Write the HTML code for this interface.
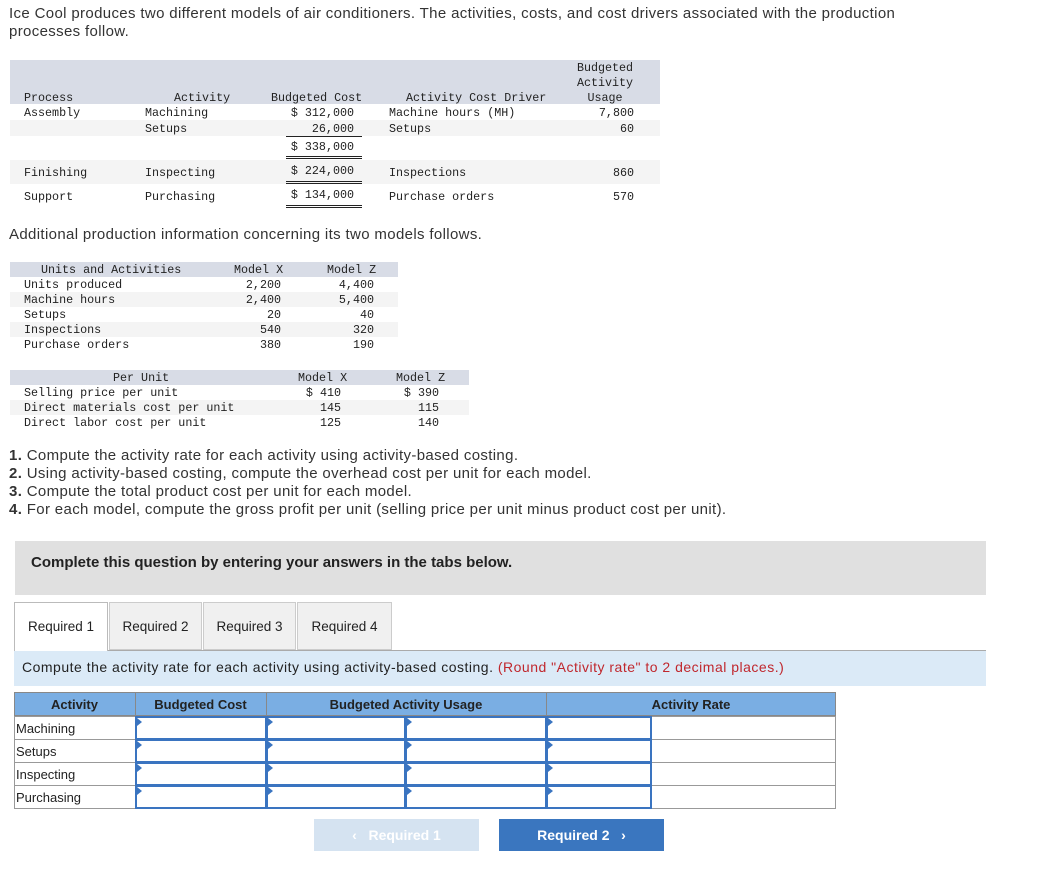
<!DOCTYPE html>
<html><head><meta charset="utf-8"><style>
*{margin:0;padding:0;box-sizing:border-box}
body{width:1042px;height:885px;background:#fff;position:relative;font-family:"Liberation Sans",sans-serif;color:#333;overflow:hidden}
.a{position:absolute;white-space:nowrap}
.m{font-family:"Liberation Mono",monospace;font-size:11.7px;color:#222}
.band{position:absolute;background:#d8dce6}
.lite{position:absolute;background:#f4f4f4}
.r{text-align:right}
.s{font-size:15px;letter-spacing:0.35px;color:#333}
.dl{position:absolute;border-top:3px double #222;height:3px}
.sl{position:absolute;border-top:1px solid #222}
.cell{position:absolute;border:1px solid #999}
.inp{position:absolute;border:2px solid #3a74c0;background:#fff}
.inp:before{content:"";position:absolute;left:0;top:0;border-left:5px solid #3a74c0;border-top:4px solid transparent;border-bottom:4px solid transparent}
.t{font-family:"Liberation Sans",sans-serif;font-size:13px;color:#222}
</style></head><body>
<div class="a s" style="left:9px;top:5px;line-height:18px">Ice Cool produces two different models of air conditioners. The activities, costs, and cost drivers associated with the production<br>processes follow.</div>

<div class="band" style="left:10px;top:60px;width:650px;height:44px"></div>
<div class="lite" style="left:10px;top:120px;width:650px;height:16px"></div>
<div class="lite" style="left:10px;top:160px;width:650px;height:24px"></div>
<div class="a m" style="left:24px;top:91px">Process</div>
<div class="a m" style="left:174px;top:91px">Activity</div>
<div class="a m" style="left:271px;top:91px">Budgeted Cost</div>
<div class="a m" style="left:406px;top:91px">Activity Cost Driver</div>
<div class="a m r" style="left:570px;top:61px;width:70px;line-height:15px;text-align:center">Budgeted<br>Activity<br>Usage</div>
<div class="a m" style="left:24px;top:106px">Assembly</div>
<div class="a m" style="left:145px;top:106px">Machining</div>
<div class="a m r" style="left:260px;top:106px;width:94px">$ 312,000</div>
<div class="a m" style="left:389px;top:106px">Machine hours (MH)</div>
<div class="a m r" style="left:560px;top:106px;width:74px">7,800</div>
<div class="a m" style="left:145px;top:122px">Setups</div>
<div class="a m r" style="left:260px;top:122px;width:94px">26,000</div>
<div class="a m" style="left:389px;top:122px">Setups</div>
<div class="a m r" style="left:560px;top:122px;width:74px">60</div>
<div class="sl" style="left:286px;top:136px;width:76px"></div>
<div class="a m r" style="left:260px;top:140px;width:94px">$ 338,000</div>
<div class="dl" style="left:286px;top:156px;width:76px"></div>
<div class="a m" style="left:24px;top:166px">Finishing</div>
<div class="a m" style="left:145px;top:166px">Inspecting</div>
<div class="a m r" style="left:260px;top:164px;width:94px">$ 224,000</div>
<div class="a m" style="left:389px;top:166px">Inspections</div>
<div class="a m r" style="left:560px;top:166px;width:74px">860</div>
<div class="dl" style="left:286px;top:181px;width:76px"></div>
<div class="a m" style="left:24px;top:190px">Support</div>
<div class="a m" style="left:145px;top:190px">Purchasing</div>
<div class="a m r" style="left:260px;top:188px;width:94px">$ 134,000</div>
<div class="a m" style="left:389px;top:190px">Purchase orders</div>
<div class="a m r" style="left:560px;top:190px;width:74px">570</div>
<div class="dl" style="left:286px;top:205px;width:76px"></div>

<div class="a s" style="left:9px;top:226px">Additional production information concerning its two models follows.</div>

<div class="band" style="left:10px;top:262px;width:388px;height:15px"></div>
<div class="lite" style="left:10px;top:292px;width:388px;height:15px"></div>
<div class="lite" style="left:10px;top:322px;width:388px;height:15px"></div>
<div class="a m" style="left:41px;top:263px">Units and Activities</div>
<div class="a m" style="left:234px;top:263px">Model X</div>
<div class="a m" style="left:327px;top:263px">Model Z</div>
<div class="a m" style="left:24px;top:278px;line-height:15px">Units produced<br>Machine hours<br>Setups<br>Inspections<br>Purchase orders</div>
<div class="a m r" style="left:220px;top:278px;width:61px;line-height:15px">2,200<br>2,400<br>20<br>540<br>380</div>
<div class="a m r" style="left:313px;top:278px;width:61px;line-height:15px">4,400<br>5,400<br>40<br>320<br>190</div>

<div class="band" style="left:10px;top:370px;width:459px;height:15px"></div>
<div class="lite" style="left:10px;top:400px;width:459px;height:15px"></div>
<div class="a m" style="left:113px;top:371px">Per Unit</div>
<div class="a m" style="left:298px;top:371px">Model X</div>
<div class="a m" style="left:396px;top:371px">Model Z</div>
<div class="a m" style="left:24px;top:386px;line-height:15px">Selling price per unit<br>Direct materials cost per unit<br>Direct labor cost per unit</div>
<div class="a m r" style="left:280px;top:386px;width:61px;line-height:15px">$ 410<br>145<br>125</div>
<div class="a m r" style="left:378px;top:386px;width:61px;line-height:15px">$ 390<br>115<br>140</div>

<div class="a s" style="left:9px;top:447px;line-height:18px"><b>1.</b> Compute the activity rate for each activity using activity-based costing.<br><b>2.</b> Using activity-based costing, compute the overhead cost per unit for each model.<br><b>3.</b> Compute the total product cost per unit for each model.<br><b>4.</b> For each model, compute the gross profit per unit (selling price per unit minus product cost per unit).</div>

<div class="a" style="left:15px;top:541px;width:971px;height:54px;background:#e0e0e0"></div>
<div class="a" style="left:31px;top:554px;font-size:15px;font-weight:bold;color:#222">Complete this question by entering your answers in the tabs below.</div>

<div class="a" style="left:14px;top:650px;width:972px;border-top:1px solid #aaa"></div>
<div class="a t" style="left:14px;top:602px;width:94px;height:49px;background:#fff;border:1px solid #bbb;border-bottom:none;text-align:center;line-height:48px;font-size:13.5px">Required 1</div>
<div class="a t" style="left:109px;top:602px;width:93px;height:48px;background:#f0f0f0;border:1px solid #ccc;text-align:center;line-height:48px;font-size:13.5px">Required 2</div>
<div class="a t" style="left:203px;top:602px;width:93px;height:48px;background:#f0f0f0;border:1px solid #ccc;text-align:center;line-height:48px;font-size:13.5px">Required 3</div>
<div class="a t" style="left:297px;top:602px;width:95px;height:48px;background:#f0f0f0;border:1px solid #ccc;text-align:center;line-height:48px;font-size:13.5px">Required 4</div>

<div class="a" style="left:14px;top:651px;width:972px;height:35px;background:#dbeaf7"></div>
<div class="a t" style="left:22px;top:659px;font-size:14px;letter-spacing:0.5px">Compute the activity rate for each activity using activity-based costing. <span style="color:#c0272d">(Round "Activity rate" to 2 decimal places.)</span></div>

<div class="a" style="left:14px;top:692px;width:822px;height:24px;background:#7aaee3;border:1px solid #888"></div>
<div class="a" style="left:135px;top:692px;height:24px;border-left:1px solid #888"></div>
<div class="a" style="left:266px;top:692px;height:24px;border-left:1px solid #888"></div>
<div class="a" style="left:546px;top:692px;height:24px;border-left:1px solid #888"></div>
<div class="a t" style="left:14px;top:697px;width:121px;text-align:center;font-weight:bold">Activity</div>
<div class="a t" style="left:135px;top:697px;width:131px;text-align:center;font-weight:bold">Budgeted Cost</div>
<div class="a t" style="left:266px;top:697px;width:280px;text-align:center;font-weight:bold">Budgeted Activity Usage</div>
<div class="a t" style="left:546px;top:697px;width:290px;text-align:center;font-weight:bold">Activity Rate</div>

<div class="cell" style="left:14px;top:716px;width:822px;height:24px"></div>
<div class="cell" style="left:14px;top:739px;width:822px;height:24px"></div>
<div class="cell" style="left:14px;top:762px;width:822px;height:24px"></div>
<div class="cell" style="left:14px;top:785px;width:822px;height:24px"></div>
<div class="a t" style="left:16px;top:721px">Machining</div>
<div class="a t" style="left:16px;top:744px">Setups</div>
<div class="a t" style="left:16px;top:767px">Inspecting</div>
<div class="a t" style="left:16px;top:790px">Purchasing</div>

<div class="inp" style="left:135px;top:716px;width:132px;height:24px"></div>
<div class="inp" style="left:266px;top:716px;width:140px;height:24px"></div>
<div class="inp" style="left:405px;top:716px;width:142px;height:24px"></div>
<div class="inp" style="left:546px;top:716px;width:106px;height:24px"></div>
<div class="inp" style="left:135px;top:739px;width:132px;height:24px"></div>
<div class="inp" style="left:266px;top:739px;width:140px;height:24px"></div>
<div class="inp" style="left:405px;top:739px;width:142px;height:24px"></div>
<div class="inp" style="left:546px;top:739px;width:106px;height:24px"></div>
<div class="inp" style="left:135px;top:762px;width:132px;height:24px"></div>
<div class="inp" style="left:266px;top:762px;width:140px;height:24px"></div>
<div class="inp" style="left:405px;top:762px;width:142px;height:24px"></div>
<div class="inp" style="left:546px;top:762px;width:106px;height:24px"></div>
<div class="inp" style="left:135px;top:785px;width:132px;height:24px"></div>
<div class="inp" style="left:266px;top:785px;width:140px;height:24px"></div>
<div class="inp" style="left:405px;top:785px;width:142px;height:24px"></div>
<div class="inp" style="left:546px;top:785px;width:106px;height:24px"></div>

<div class="a" style="left:314px;top:819px;width:165px;height:32px;background:#d5e3f1;color:#fff;font-size:14px;font-weight:bold;text-align:center;line-height:32px">&#8249;&nbsp;&nbsp; Required 1</div>
<div class="a" style="left:499px;top:819px;width:165px;height:32px;background:#3a76bf;color:#fff;font-size:14px;font-weight:bold;text-align:center;line-height:32px">Required 2 &nbsp;&nbsp;&#8250;</div>
</body></html>
